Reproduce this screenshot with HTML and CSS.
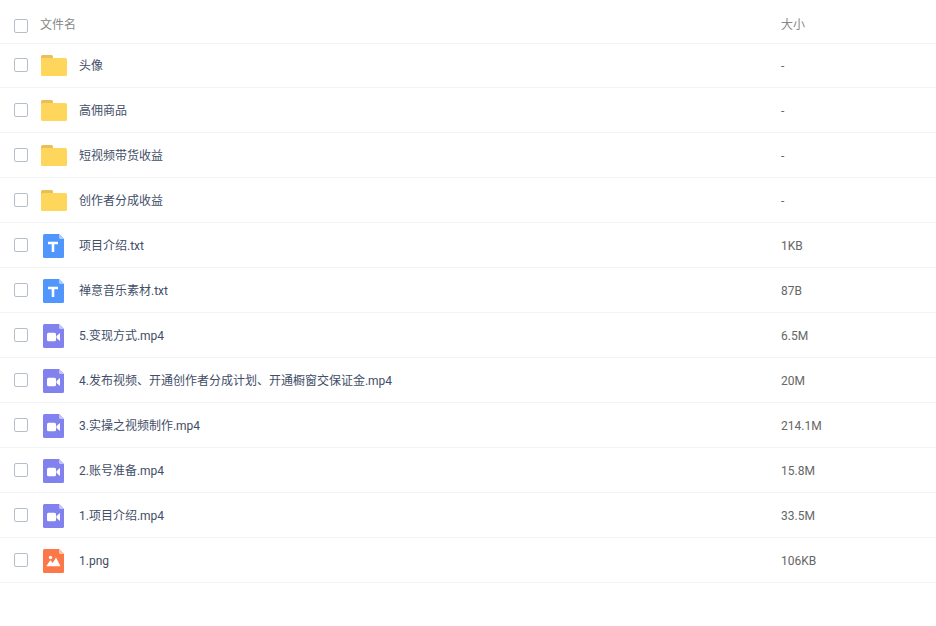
FILE: index.html
```
<!DOCTYPE html>
<html lang="zh-CN">

<head>
    <meta charset="UTF-8" />
    <meta name="viewport" content="width=device-width, initial-scale=1.0" />
    <title>文件列表</title>
    <link rel="stylesheet" href="styles.css">
</head>

<body>
    <svg class="sprite" aria-hidden="true">
        <symbol id="icon-folder" viewBox="0 0 28 28">
            <path fill="#e8bf58" d="M1 10V5.500Q1 4 2.500 4H11.500Q13 4 13 5.500V10Z" />
            <rect x="1" y="7" width="26" height="18" rx="1.500" fill="#ffd65c" />
        </symbol>
        <symbol id="icon-txt" viewBox="0 0 28 28">
            <path fill="#5096fc" d="M4.500 3H19L24 8V25.500Q24 27 22.500 27H4.500Q3 27 3 25.500V4.500Q3 3 4.500 3Z" />
            <path fill="#a9cdff" d="M19 3L24 8H20.500Q19 8 19 6.500Z" />
            <path fill="#fff" d="M8 10.700H18V13.200H14.300V21H11.700V13.200H8Z" />
        </symbol>
        <symbol id="icon-video" viewBox="0 0 28 28">
            <path fill="#8282ee" d="M4.500 3H19L24 8V25.500Q24 27 22.500 27H4.500Q3 27 3 25.500V4.500Q3 3 4.500 3Z" />
            <path fill="#c4c4fa" d="M19 3L24 8H20.500Q19 8 19 6.500Z" />
            <rect x="7" y="11.700" width="9" height="8.500" rx="1.500" fill="#fff" />
            <path fill="#fff" d="M16.500 15L20 12V20L16.500 17Z" />
        </symbol>
        <symbol id="icon-image" viewBox="0 0 28 28">
            <path fill="#fc7848" d="M4.500 3H19L24 8V25.500Q24 27 22.500 27H4.500Q3 27 3 25.500V4.500Q3 3 4.500 3Z" />
            <path fill="#ffc3a8" d="M19 3L24 8H20.500Q19 8 19 6.500Z" />
            <circle cx="10.500" cy="11.500" r="1.700" fill="#fff" />
            <path fill="#fff" d="M6.300 20.300L10.300 14.300L12.800 17L16 11.500L20.500 20.300Z" />
        </symbol>
    </svg>

    <table class="file-list">
        <thead>
            <tr>
                <th class="col-check"><input type="checkbox" id="all" aria-label="全选" /></th>
                <th class="col-name">文件名</th>
                <th class="col-size">大小</th>
            </tr>
        </thead>
        <tbody>
            <tr>
                <td class="col-check"><input type="checkbox" id="f1" /></td>
                <td><label class="file" for="f1"><svg class="icon"><use href="#icon-folder" /></svg><span>头像</span></label></td>
                <td class="size">-</td>
            </tr>
            <tr>
                <td class="col-check"><input type="checkbox" id="f2" /></td>
                <td><label class="file" for="f2"><svg class="icon"><use href="#icon-folder" /></svg><span>高佣商品</span></label></td>
                <td class="size">-</td>
            </tr>
            <tr>
                <td class="col-check"><input type="checkbox" id="f3" /></td>
                <td><label class="file" for="f3"><svg class="icon"><use href="#icon-folder" /></svg><span>短视频带货收益</span></label></td>
                <td class="size">-</td>
            </tr>
            <tr>
                <td class="col-check"><input type="checkbox" id="f4" /></td>
                <td><label class="file" for="f4"><svg class="icon"><use href="#icon-folder" /></svg><span>创作者分成收益</span></label></td>
                <td class="size">-</td>
            </tr>
            <tr>
                <td class="col-check"><input type="checkbox" id="f5" /></td>
                <td><label class="file" for="f5"><svg class="icon"><use href="#icon-txt" /></svg><span>项目介绍.txt</span></label></td>
                <td class="size">1KB</td>
            </tr>
            <tr>
                <td class="col-check"><input type="checkbox" id="f6" /></td>
                <td><label class="file" for="f6"><svg class="icon"><use href="#icon-txt" /></svg><span>禅意音乐素材.txt</span></label></td>
                <td class="size">87B</td>
            </tr>
            <tr>
                <td class="col-check"><input type="checkbox" id="f7" /></td>
                <td><label class="file" for="f7"><svg class="icon"><use href="#icon-video" /></svg><span>5.变现方式.mp4</span></label></td>
                <td class="size">6.5M</td>
            </tr>
            <tr>
                <td class="col-check"><input type="checkbox" id="f8" /></td>
                <td><label class="file" for="f8"><svg class="icon"><use href="#icon-video" /></svg><span>4.发布视频、开通创作者分成计划、开通橱窗交保证金.mp4</span></label></td>
                <td class="size">20M</td>
            </tr>
            <tr>
                <td class="col-check"><input type="checkbox" id="f9" /></td>
                <td><label class="file" for="f9"><svg class="icon"><use href="#icon-video" /></svg><span>3.实操之视频制作.mp4</span></label></td>
                <td class="size">214.1M</td>
            </tr>
            <tr>
                <td class="col-check"><input type="checkbox" id="f10" /></td>
                <td><label class="file" for="f10"><svg class="icon"><use href="#icon-video" /></svg><span>2.账号准备.mp4</span></label></td>
                <td class="size">15.8M</td>
            </tr>
            <tr>
                <td class="col-check"><input type="checkbox" id="f11" /></td>
                <td><label class="file" for="f11"><svg class="icon"><use href="#icon-video" /></svg><span>1.项目介绍.mp4</span></label></td>
                <td class="size">33.5M</td>
            </tr>
            <tr>
                <td class="col-check"><input type="checkbox" id="f12" /></td>
                <td><label class="file" for="f12"><svg class="icon"><use href="#icon-image" /></svg><span>1.png</span></label></td>
                <td class="size">106KB</td>
            </tr>
        </tbody>
    </table>
</body>

</html>
```
FILE: styles.css
```
* {
    box-sizing: border-box;
}

body {
    margin: 0;
    font-family: Roboto, "Noto Sans CJK SC", sans-serif;
    font-size: 12px;
    line-height: 18px;
    color: #666;
    background-color: #fff;
}

.sprite {
    display: none;
}

.file-list {
    width: 100%;
    table-layout: fixed;
    border-collapse: separate;
    border-spacing: 0;
}

th,
td {
    padding: 0;
    text-align: left;
    vertical-align: middle;
    border-bottom: 1px solid #f2f4f6;
}

th {
    height: 44px;
    padding-top: 6px;
    font-weight: normal;
    color: #888;
}

th.col-check {
    padding-top: 8px;
}

td {
    height: 45px;
}

tbody tr:first-child td {
    height: 44px;
    padding-bottom: 1px;
}

.col-check {
    width: 40px;
    padding-left: 14px;
}

.col-size {
    width: 155px;
}

.size,
.file span {
    padding-top: 2px;
}

input[type="checkbox"] {
    appearance: none;
    display: block;
    width: 14px;
    height: 14px;
    margin: 0;
    border: 1px solid #b4bfca;
    border-radius: 2px;
    background-color: #fff;
    cursor: pointer;
}

input[type="checkbox"]:checked {
    border-color: #5096fc;
    background-color: #5096fc;
}

.file {
    display: flex;
    align-items: center;
    gap: 11px;
    color: #424e67;
    cursor: pointer;
}

.icon {
    flex: none;
    width: 28px;
    height: 28px;
}
```
